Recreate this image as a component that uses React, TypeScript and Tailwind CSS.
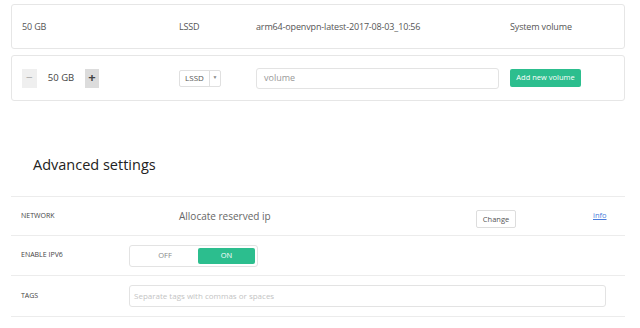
import React from "react";

export default function App() {
  return (
    <div
      className="w-[640px] h-[328px] bg-white text-[#555] px-[11px] pt-[4px] overflow-hidden"
      style={{ fontFamily: "'Open Sans', 'Noto Sans', sans-serif" }}
    >
      {/* existing volume */}
      <div className="w-[614px] h-[45px] border border-[#e6e6e6] rounded-[3px] flex items-center text-[9px] tracking-[-0.15px]">
        <div className="w-[167px] pl-[10px]">50 GB</div>
        <div className="w-[77px]">LSSD</div>
        <div className="w-[254px]">arm64-openvpn-latest-2017-08-03_10:56</div>
        <div>System volume</div>
      </div>

      {/* new volume */}
      <div className="w-[614px] h-[46px] mt-[6px] border border-[#e6e6e6] rounded-[3px] flex items-center text-[9px]">
        <div className="w-[167px] pl-[10px]">
          <div className="flex h-[19px] w-[77px]">
            <div className="w-[15px] bg-[#efefef] flex items-center justify-center text-[#aaa] text-[12px]">
              −
            </div>
            <div className="w-[48px] bg-white flex items-center justify-center text-[9.5px] text-[#444]">
              50 GB
            </div>
            <div className="w-[14px] bg-[#dcdcdc] flex items-center justify-center text-[#444] text-[13px] font-bold">
              +
            </div>
          </div>
        </div>
        <div className="w-[77px]">
          <div className="flex h-[17px] w-[42px] border border-[#e0e0e0] rounded-[2px] items-center">
            <div className="w-[29px] text-center text-[8px]">LSSD</div>
            <div className="flex-1 h-full border-l border-[#e0e0e0] flex items-center justify-center text-[5px] text-[#888]">
              ▼
            </div>
          </div>
        </div>
        <div className="w-[254px]">
          <div className="w-[243px] h-[21px] border border-[#e3e3e3] rounded-[3px] flex items-center pl-[7px] text-[9px] text-[#999]">
            volume
          </div>
        </div>
        <div>
          <button className="w-[71px] h-[18px] bg-[#2cbe8e] rounded-[2px] text-white text-[7.5px]">
            Add new volume
          </button>
        </div>
      </div>

      <div className="pl-[22px] pt-[53px] h-[95px] text-[14.5px] text-[#222]">Advanced settings</div>

      {/* rows */}
      <div className="w-[614px] border-t border-[#ececec]">
        <div className="h-[39px] border-b border-[#ececec] flex items-center">
          <div className="w-[168px] pl-[10px] text-[7px] text-[#444]">NETWORK</div>
          <div className="w-[297px] text-[10px] text-[#666]">Allocate reserved ip</div>
          <div className="w-[117px]">
            <button className="w-[40px] h-[18px] border border-[#ddd] rounded-[2px] text-[7.5px] text-[#555] bg-white">
              Change
            </button>
          </div>
          <a className="text-[7.5px] text-[#4a7cdb] underline">info</a>
        </div>
        <div className="h-[40px] border-b border-[#ececec] flex items-center">
          <div className="w-[118px] pl-[10px] text-[7px] text-[#444]">ENABLE IPV6</div>
          <div className="w-[129px] h-[22px] border border-[#e3e3e3] rounded-[3px] flex items-center p-[2px]">
            <div className="flex-1 text-center text-[7.5px] text-[#888]">OFF</div>
            <div className="w-[57px] h-[16px] bg-[#2cbe8e] rounded-[2px] flex items-center justify-center text-[7.5px] text-white">
              ON
            </div>
          </div>
        </div>
        <div className="h-[41px] border-b border-[#ececec] flex items-center">
          <div className="w-[118px] pl-[10px] text-[7px] text-[#444]">TAGS</div>
          <div className="w-[477px] h-[22px] border border-[#e3e3e3] rounded-[3px] flex items-center pl-[4px] text-[8px] text-[#c4c4c4]">
            Separate tags with commas or spaces
          </div>
        </div>
      </div>
    </div>
  );
}
